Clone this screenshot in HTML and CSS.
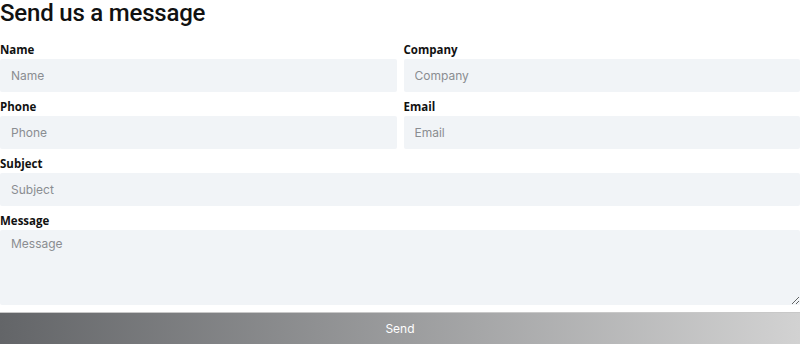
FILE: index.html
```html
<!DOCTYPE html>
<html lang="en">
<head>
    <meta charset="UTF-8">
    <title>Contact</title>
    <meta name="viewport" content="width=device-width, initial-scale=1.0">
    <link rel="stylesheet" href="styles.css">
</head>
<body>
    <h2 class="title">Send us a message</h2>
    <form class="contact-form">
        <div class="row">
            <div class="field">
                <label for="name">Name</label>
                <input id="name" type="text" placeholder="Name">
            </div>
            <div class="field">
                <label for="company">Company</label>
                <input id="company" type="text" placeholder="Company">
            </div>
        </div>
        <div class="row">
            <div class="field">
                <label for="phone">Phone</label>
                <input id="phone" type="text" placeholder="Phone">
            </div>
            <div class="field">
                <label for="email">Email</label>
                <input id="email" type="email" placeholder="Email">
            </div>
        </div>
        <div class="field">
            <label for="subject">Subject</label>
            <input id="subject" type="text" placeholder="Subject">
        </div>
        <div class="field">
            <label for="message">Message</label>
            <textarea id="message" placeholder="Message"></textarea>
        </div>
        <button type="submit" class="send">Send</button>
    </form>
</body>
</html>
```

FILE: styles.css
```css
body {
    margin: 0;
    font-family: Inter, "Noto Sans", sans-serif;
    color: #111;
    background: #fff;
}
.title {
    margin: 0 0 16px;
    font-family: Roboto, sans-serif;
    font-weight: 500;
    font-size: 24px;
    line-height: 27px;
    letter-spacing: -0.2px;
}
.contact-form {
    display: flex;
    flex-direction: column;
}
.row {
    display: grid;
    grid-template-columns: 1fr 1fr;
    gap: 7px;
}
.field {
    display: flex;
    flex-direction: column;
    margin-bottom: 8px;
}
label {
    font-family: "Open Sans", sans-serif;
    font-size: 11.5px;
    font-weight: 700;
    line-height: 14px;
    margin-bottom: 2px;
    color: #111;
}
input, textarea {
    font-family: Inter, "Noto Sans", sans-serif;
    font-size: 12px;
    color: #333;
    background-color: #f1f4f7;
    border: none;
    border-radius: 2px;
    padding: 0 11px;
    height: 33px;
    box-sizing: border-box;
    outline: none;
}
textarea {
    height: 75px;
    padding: 6px 11px;
    resize: vertical;
}
input::placeholder, textarea::placeholder {
    color: #8a8d91;
}
.send {
    margin-top: -1px;
    height: 32px;
    border: none;
    border-top: 1px solid #c8c8c8;
    background: linear-gradient(90deg, #636568, #d2d2d2);
    color: #fff;
    font-family: Inter, "Noto Sans", sans-serif;
    font-size: 12px;
    cursor: pointer;
}
```
